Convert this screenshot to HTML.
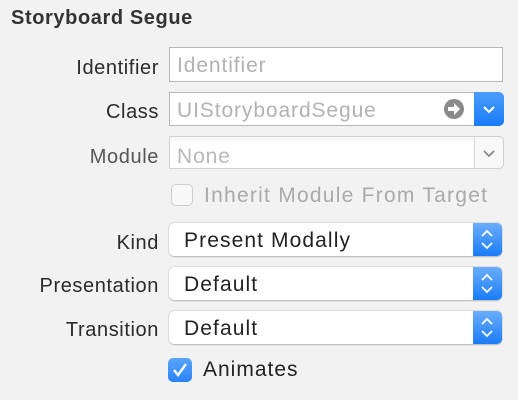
<!DOCTYPE html><html><head><style>
body{margin:0;width:518px;height:400px;background:#f2f2f2;font-family:"Liberation Sans",sans-serif;position:relative;overflow:hidden}
.a{position:absolute}
.t{left:11px;top:7px;font-size:20px;font-weight:bold;color:#333;letter-spacing:.6px}
.l{right:359px;font-size:20px;color:#2a2a2a;text-align:right;letter-spacing:.6px}
.f{background:#fff;border:1px solid #b8b8b8;box-sizing:border-box;font-size:21px;color:#b2b2b2;padding-left:7px;line-height:35px;letter-spacing:.9px}
.p{background:#fff;border-radius:5px;box-shadow:0 0 0 .5px #c8c8c8,0 1px 1px rgba(0,0,0,.3);font-size:21px;color:#222;padding-left:15px;box-sizing:border-box;line-height:36px;overflow:hidden;letter-spacing:1.1px}
.b{position:absolute;right:0;top:0;bottom:0;width:29px;background:linear-gradient(#6aaefc,#1a7cf8)}
</style></head><body>
<div class="a t">Storyboard Segue</div>
<div class="a l" style="top:57px">Identifier</div>
<div class="a f" style="left:169px;top:47px;width:334px;height:35px">Identifier</div>
<div class="a l" style="top:101px">Class</div>
<div class="a f" style="left:169px;top:92px;width:306px;height:34px">UIStoryboardSegue</div>
<svg class="a" style="left:443px;top:98px" width="22" height="22"><circle cx="11" cy="11" r="10" fill="#8a8a8a"/><path d="M5 9h6V5l6 6-6 6v-4H5z" fill="#fff"/></svg>
<div class="a" style="left:474px;top:92px;width:30px;height:34px;border-radius:0 5px 5px 0;background:linear-gradient(#4a9dfb,#1a7cf8)"><svg width="30" height="34"><path d="M10 15l5 5 5-5" stroke="#fff" stroke-width="2" fill="none"/></svg></div>
<div class="a l" style="top:146px;color:#555">Module</div>
<div class="a" style="left:169px;top:136px;width:335px;height:33px;border:1px solid #d0d0d0;border-radius:0 5px 5px 0;box-sizing:border-box;background:#f8f8f8"></div>
<div class="a f" style="left:170px;top:141px;width:303px;height:27px;border:none;line-height:31px;color:#b8b8b8">None</div>
<div class="a" style="left:474px;top:137px;width:1px;height:31px;background:#ddd"></div>
<svg class="a" style="left:475px;top:137px" width="28" height="31"><path d="M9 14l5 5 5-5" stroke="#888" stroke-width="1.8" fill="none"/></svg>
<div class="a" style="left:171px;top:184px;width:22px;height:22px;border:1px solid #cfcfcf;border-radius:5px;box-sizing:border-box;background:#f8f8f8"></div>
<div class="a" style="left:204px;top:184px;font-size:21px;color:#aaa;letter-spacing:1.25px">Inherit Module From Target</div>
<div class="a l" style="top:232px">Kind</div>
<div class="a p" style="left:169px;top:223px;width:333px;height:33px">Present Modally<div class="b"><svg width="29" height="33"><path d="M9 13l5-5 5 5M9 20l5 5 5-5" stroke="#fff" stroke-width="1.8" fill="none"/></svg></div></div>
<div class="a l" style="top:275px">Presentation</div>
<div class="a p" style="left:169px;top:267px;width:333px;height:33px">Default<div class="b"><svg width="29" height="33"><path d="M9 13l5-5 5 5M9 20l5 5 5-5" stroke="#fff" stroke-width="1.8" fill="none"/></svg></div></div>
<div class="a l" style="top:319px">Transition</div>
<div class="a p" style="left:169px;top:311px;width:333px;height:33px">Default<div class="b"><svg width="29" height="33"><path d="M9 13l5-5 5 5M9 20l5 5 5-5" stroke="#fff" stroke-width="1.8" fill="none"/></svg></div></div>
<div class="a" style="left:168px;top:358px;width:24px;height:24px;border-radius:5px;background:linear-gradient(#5aa5fb,#2a84f8)"><svg width="24" height="24"><path d="M6 12l4 5 8-11" stroke="#fff" stroke-width="2.4" fill="none"/></svg></div>
<div class="a" style="left:203px;top:358px;font-size:21px;color:#222;letter-spacing:1px">Animates</div>
</body></html>
